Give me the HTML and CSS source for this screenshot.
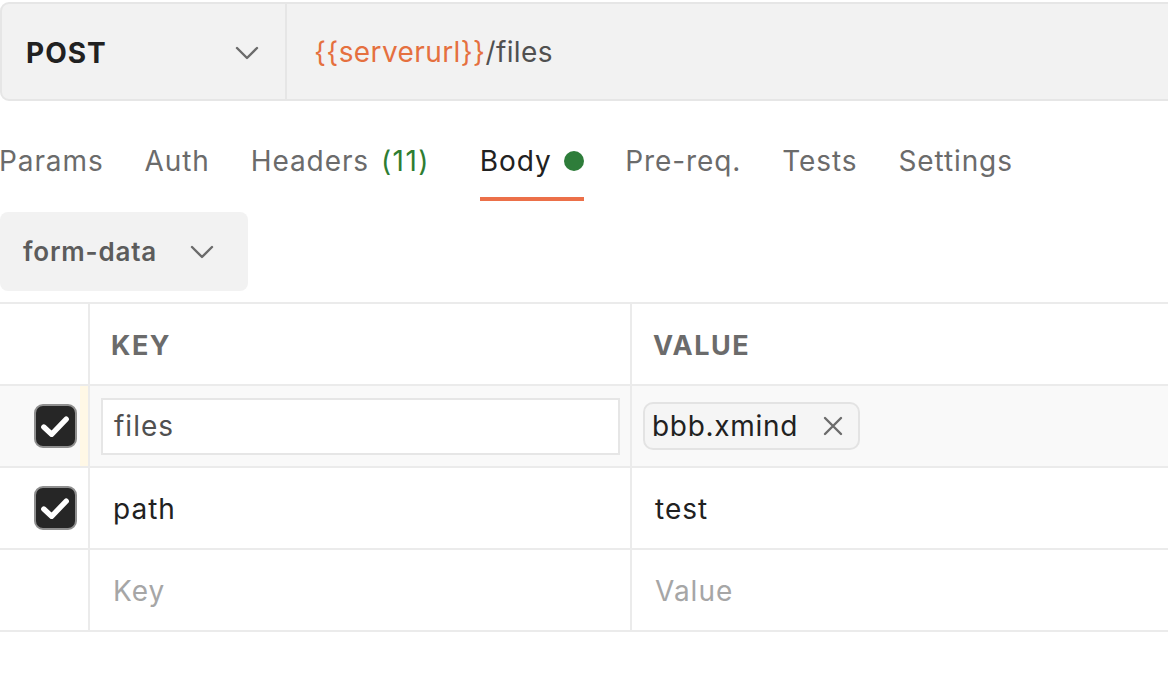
FILE: index.html
```html
<!DOCTYPE html>
<html lang="en">
<head>
<meta charset="utf-8">
<title>Request</title>
<link rel="stylesheet" href="styles.css">
</head>
<body>
<div class="page">
  <div class="urlbar">
    <div class="method">
      <span class="method-name">POST</span>
      <svg class="chev" width="24" height="14" viewBox="0 0 24 14"><path d="M2 2 L12 12 L22 2" fill="none" stroke="#6b6b6b" stroke-width="2.4" stroke-linecap="round" stroke-linejoin="round"/></svg>
    </div>
    <div class="url"><span class="var">{{serverurl}}</span><span class="path">/files</span></div>
  </div>

  <div class="tabs">
    <div class="tab">Params</div>
    <div class="tab">Auth</div>
    <div class="tab tab-headers">Headers<span class="count">(11)</span></div>
    <div class="tab active">Body <span class="dot"></span></div>
    <div class="tab">Pre-req.</div>
    <div class="tab">Tests</div>
    <div class="tab">Settings</div>
  </div>

  <div class="bodytype">
    <span>form-data</span>
    <svg class="chev" width="24" height="14" viewBox="0 0 24 14"><path d="M2 2 L12 12 L22 2" fill="none" stroke="#6b6b6b" stroke-width="2.4" stroke-linecap="round" stroke-linejoin="round"/></svg>
  </div>

  <div class="table">
    <div class="row head">
      <div class="cell c0"></div>
      <div class="cell c1">KEY</div>
      <div class="cell c2">VALUE</div>
    </div>
    <div class="row hover">
      <div class="cell c0">
        <span class="check"><svg width="40" height="40" viewBox="0 0 40 40"><path d="M8 21 L16 28.5 L31 13" fill="none" stroke="#fff" stroke-width="5.5" stroke-linecap="round" stroke-linejoin="round"/></svg></span>
        <span class="strip"></span>
      </div>
      <div class="cell c1 pad-s"><div class="input">files</div></div>
      <div class="cell c2 pad-s">
        <div class="chip"><span>bbb.xmind</span>
          <svg width="20" height="20" viewBox="0 0 20 20"><path d="M2 2 L18 18 M18 2 L2 18" fill="none" stroke="#6b6b6b" stroke-width="2.4" stroke-linecap="round"/></svg>
        </div>
      </div>
    </div>
    <div class="row">
      <div class="cell c0">
        <span class="check"><svg width="40" height="40" viewBox="0 0 40 40"><path d="M8 21 L16 28.5 L31 13" fill="none" stroke="#fff" stroke-width="5.5" stroke-linecap="round" stroke-linejoin="round"/></svg></span>
        <span class="strip none"></span>
      </div>
      <div class="cell c1 text">path</div>
      <div class="cell c2 text">test</div>
    </div>
    <div class="row">
      <div class="cell c0"></div>
      <div class="cell c1 text ph">Key</div>
      <div class="cell c2 text ph">Value</div>
    </div>
  </div>
</div>
</body>
</html>
```

FILE: styles.css
```css
* { box-sizing: border-box; }
html, body { margin: 0; padding: 0; background: #fff; }
body {
  font-family: Inter, "Noto Sans", sans-serif;
  font-size: 28px;
  letter-spacing: 1px;
  color: #212121;
  width: 1168px;
  height: 678px;
  overflow: hidden;
}
.page { width: 1168px; }

.urlbar {
  margin-top: 2px;
  width: 1200px;
  height: 99px;
  display: flex;
  background: #f2f2f2;
  border: 2px solid #e6e6e6;
  border-radius: 9px 0 0 9px;
}
.method {
  width: 285px;
  flex: none;
  display: flex;
  align-items: center;
  justify-content: space-between;
  padding: 2px 26px 0 24px;
  border-right: 2px solid #e6e6e6;
}
.method-name { font-weight: 700; font-size: 28px; color: #212121; letter-spacing: 1px; }
.chev { display: block; }
.url {
  display: flex;
  align-items: center;
  padding-left: 27px;
  font-size: 28px;
  letter-spacing: 0.4px;
}
.var { color: #e5703f; }
.path { color: #505050; }

.tabs {
  display: flex;
  gap: 41px;
  margin-top: 43px;
  margin-left: -1px;
}
.tab {
  color: #6b6b6b;
  line-height: 34px;
  padding-bottom: 19px;
  border-bottom: 4px solid transparent;
  display: flex;
  align-items: center;
  white-space: pre;
  letter-spacing: 0.9px;
}
.tab-headers { margin-right: 9px; }
.count { color: #2e7d32; margin-left: 12px; letter-spacing: 1.4px; }
.tab.active { color: #212121; border-bottom-color: #ec7049; }
.dot {
  display: inline-block;
  width: 20px;
  height: 20px;
  border-radius: 50%;
  background: #2e7d3a;
  margin-left: 4px;
}

.bodytype {
  margin-top: 11px;
  width: 248px;
  height: 79px;
  background: #f2f2f2;
  border-radius: 8px;
  display: flex;
  align-items: center;
  padding: 0 34px 0 23px;
  justify-content: space-between;
  font-weight: 600;
  font-size: 26px;
  letter-spacing: 0.8px;
  color: #5c5c5c;
}

.table {
  margin-top: 11px;
  border-top: 2px solid #ebebeb;
  width: 1168px;
}
.row {
  display: flex;
  height: 82px;
  border-bottom: 2px solid #ebebeb;
}
.row.hover { background: #f9f9f9; }
.cell {
  display: flex;
  align-items: center;
  padding-top: 2px;
}
.c0 {
  width: 90px;
  flex: none;
  justify-content: flex-end;
  align-items: stretch;
  padding-top: 0;
  border-right: 2px solid #ebebeb;
}
.c1 {
  width: 542px;
  flex: none;
  border-right: 2px solid #ebebeb;
  padding-left: 21px;
}
.c2 { flex: 1; padding-left: 21px; }
.head .cell { font-weight: 700; color: #6b6b6b; font-size: 27px; letter-spacing: 1.5px; }
.pad-s { padding-left: 11px; padding-right: 10px; padding-top: 0; }
.text { padding-left: 23px; }
.ph { color: #a6a6a6; }

.check {
  align-self: center;
  width: 43px;
  height: 44px;
  border-radius: 9px;
  border: 2px solid #8f8f8f;
  background: #262626;
  display: flex;
  align-items: center;
  justify-content: center;
  margin-right: 3px;
}
.check svg { display: block; }
.strip { width: 8px; background: #fff8e6; }
.strip.none { background: transparent; }

.input {
  width: 100%;
  height: 57px;
  background: #fff;
  border: 2px solid #e6e6e6;
  display: flex;
  align-items: center;
  padding-left: 11px;
  color: #505050;
}
.chip {
  height: 48px;
  display: flex;
  align-items: center;
  gap: 25px;
  padding: 0 15px 0 7px;
  border: 2px solid #e3e3e3;
  border-radius: 10px;
  background: #f5f5f5;
  letter-spacing: 0.7px;
}
.chip svg { display: block; }
```
